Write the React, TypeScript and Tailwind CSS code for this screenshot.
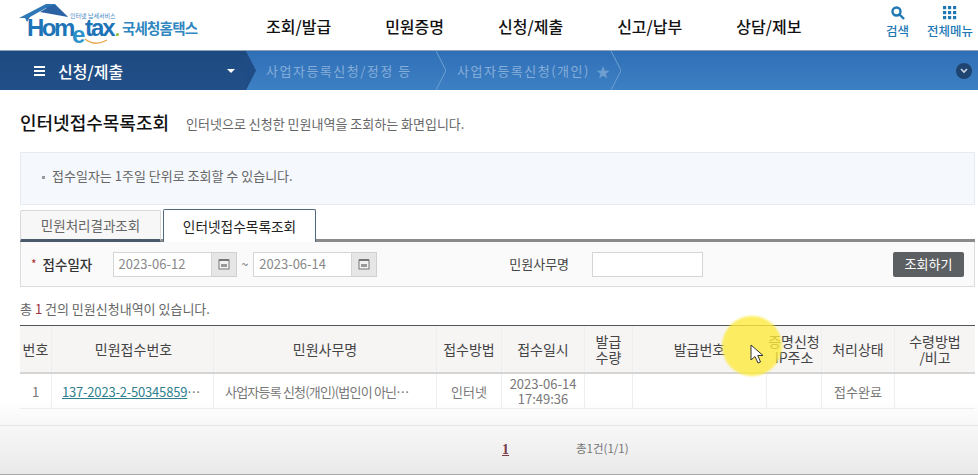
import React from 'react';

const font = "font-['Noto_Sans_CJK_KR','Noto_Sans',sans-serif]";

const topMenus = ['조회/발급', '민원증명', '신청/제출', '신고/납부', '상담/제보'];

const DateField = ({ value }: { value: string }) => (
    <div className="flex h-[25px]">
        <div className="w-[99px] border border-[#d5d5d5] bg-white pl-[5px] text-[13px] leading-[21px] text-[#888]">
            {value}
        </div>
        <div className="flex w-[25px] items-center justify-center border border-l-0 border-[#d0d0d0] bg-[#e6e6e6]">
            <svg width="12" height="12" viewBox="0 0 12 12">
                <rect x="1" y="2" width="10" height="9" fill="#f3f3f3" stroke="#777" />
                <rect x="1" y="1" width="10" height="2" fill="#777" />
                <rect x="3" y="6" width="6" height="3" fill="#999" />
            </svg>
        </div>
    </div>
);

const HeadCell = ({ className, children }: { className: string; children: React.ReactNode }) => (
    <div className={`flex items-center justify-center border-r border-[#eeeeee] text-center text-[14px] leading-[16px] text-[#444] ${className}`}>
        {children}
    </div>
);

const BodyCell = ({ className, children }: { className: string; children?: React.ReactNode }) => (
    <div className={`flex items-center justify-center border-r border-[#eeeeee] text-center text-[13px] leading-[15px] text-[#777] ${className}`}>
        {children}
    </div>
);

export default function App() {
    return (
        <div className={`relative h-[475px] w-[978px] overflow-hidden bg-white ${font}`}>
            {/* top header */}
            <header className="flex h-[51px] items-start border-b border-[#8fa3b8]">
                <div className="relative ml-[18px] h-[50px] w-[182px] shrink-0 font-['Liberation_Sans',sans-serif]">
                    <svg className="absolute left-0 top-[3px]" width="52" height="20" viewBox="0 0 52 20">
                        <path d="M1 15 L28 1 L37 1 L50 14 L28 5 L12 14 L9 19 L7 15 Z" fill="#2f78b8" />
                        <path d="M22 9 L32 3 L37 2 L50 14 Z" fill="#2a62a4" />
                    </svg>
                    <span className="absolute left-[52px] top-[12px] font-['Noto_Sans_CJK_KR',sans-serif] text-[6px] leading-[7px] text-[#3f86c4]">인터넷 납세서비스</span>
                    <span className="absolute left-[9px] top-[19px] text-[24px] font-bold leading-[17px] tracking-[-2.5px] text-[#1f74b8]">Hom</span>
                    <span className="absolute left-[54px] top-[27px] text-[24px] font-bold leading-[15px] text-[#2a93c9]">e</span>
                    <span className="absolute left-[67px] top-[19px] text-[24px] font-bold leading-[17px] tracking-[-2px] text-[#1f74b8]">tax</span>
                    <i className="absolute left-[98px] top-[33px] h-[3px] w-[3px] rounded-full bg-[#8cbb2a]" />
                    <svg className="absolute left-[66px] top-[38px]" width="24" height="8" viewBox="0 0 24 8" fill="none" stroke="#e8a94a" strokeWidth="1.3">
                        <path d="M1 1 Q11 9 23 2" />
                    </svg>
                    <span className="absolute left-[104px] top-[19px] font-['Noto_Sans_CJK_KR',sans-serif] text-[14.5px] font-bold leading-[18px] tracking-[-0.8px] text-[#2f86c0]">국세청홈택스</span>
                </div>
                <nav className="ml-[66px] flex w-[595px] gap-[54px] pt-[14px]">
                    {topMenus.map((m) => (
                        <span key={m} className="text-[16px] font-medium leading-[24px] text-[#111]">
                            {m}
                        </span>
                    ))}
                </nav>
                <div className="ml-[25px] flex flex-col items-center pt-[6px]">
                    <svg width="14" height="14" viewBox="0 0 14 14" fill="none" stroke="#1e78b4" strokeWidth="2.4">
                        <circle cx="5.5" cy="5.5" r="4" />
                        <path d="M8.5 8.5 L13 13" />
                    </svg>
                    <span className="mt-[3px] text-[12.5px] font-medium leading-[15px] text-[#1e78b4]">검색</span>
                </div>
                <div className="ml-[18px] flex flex-col items-center pt-[6px]">
                    <svg width="14" height="14" viewBox="0 0 14 14" fill="#1e78b4">
                        {[0, 5, 10].map((y) =>
                            [0, 5, 10].map((x) => <rect key={`${x}-${y}`} x={x} y={y} width="3.2" height="3.2" />),
                        )}
                    </svg>
                    <span className="mt-[3px] text-[12.5px] font-medium leading-[15px] text-[#1e78b4]">전체메뉴</span>
                </div>
            </header>

            {/* breadcrumb bar */}
            <div className="relative flex h-[39px] items-center bg-gradient-to-b from-[#2f6fb6] to-[#3e80c4]">
                <div className="flex h-full w-[246px] items-center bg-gradient-to-b from-[#1b4a80] to-[#234f88] pl-[34px]">
                    <span className="flex w-[11px] flex-col gap-[2px]">
                        <i className="h-[2px] bg-white" />
                        <i className="h-[2px] bg-white" />
                        <i className="h-[2px] bg-white" />
                    </span>
                    <span className="ml-[13px] text-[16px] font-medium leading-[22px] text-white">신청/제출</span>
                    <span className="ml-[104px] h-0 w-0 border-x-[4px] border-t-[4px] border-x-transparent border-t-white" />
                </div>
                <svg className="h-full w-[10px] shrink-0" viewBox="0 0 10 39" preserveAspectRatio="none">
                    <path d="M0 0 L10 19.5 L0 39 Z" fill="#1f4c84" />
                </svg>
                <span className="ml-[10px] w-[170px] text-[13px] leading-[20px] tracking-[1.5px] text-[#86aeda]">사업자등록신청/정정 등</span>
                <svg className="h-full w-[10px] shrink-0" viewBox="0 0 10 39" preserveAspectRatio="none" fill="none" stroke="#6ea0d3">
                    <path d="M0 0 L10 19.5 L0 39" />
                </svg>
                <span className="ml-[11px] text-[13px] leading-[20px] tracking-[1.5px] text-[#86aeda]">사업자등록신청(개인)</span>
                <span className="ml-[6px] text-[14px] leading-[20px] text-[#6f9fd0]">★</span>
                <svg className="ml-[1px] h-full w-[10px] shrink-0" viewBox="0 0 10 39" preserveAspectRatio="none" fill="none" stroke="#6ea0d3">
                    <path d="M0 0 L10 19.5 L0 39" />
                </svg>
                <span className="ml-auto mr-[6px] flex h-[16px] w-[16px] items-center justify-center rounded-full bg-[#1f4470]">
                    <svg width="8" height="6" viewBox="0 0 8 6" fill="none" stroke="#c9d6e6" strokeWidth="1.6">
                        <path d="M1 1 L4 4 L7 1" />
                    </svg>
                </span>
            </div>

            <main className="px-[20px] pr-[3px]">
                {/* title */}
                <div className="flex h-[62px] items-end pb-[18px]">
                    <h1 className="text-[18px] font-medium leading-[24px] text-[#111]">인터넷접수목록조회</h1>
                    <p className="ml-[17px] text-[13px] leading-[20px] text-[#666]">인터넷으로 신청한 민원내역을 조회하는 화면입니다.</p>
                </div>

                {/* notice */}
                <div className="flex h-[53px] items-center border border-[#e6ebf2] bg-[#f5f8fc] pb-[5px] pl-[21px] text-[13px] text-[#666]">
                    <span className="mr-[7px] mt-[3px] h-[3px] w-[3px] bg-[#999]" />
                    접수일자는 1주일 단위로 조회할 수 있습니다.
                </div>

                {/* tabs */}
                <div className="mt-[5px] flex h-[32px] items-end border-b-[3px] border-[#8a8a8a]">
                    <div className="relative -mb-[3px] flex h-[32px] w-[141px] items-center justify-center rounded-t-[2px] border border-b-[3px] border-[#d8d8d8] border-b-[#4a5a6a] bg-[#f7f7f7] text-[13.5px] text-[#666]">
                        민원처리결과조회
                    </div>
                    <div className="relative -mb-[3px] ml-[2px] flex h-[33px] w-[153px] items-center justify-center rounded-t-[2px] border border-b-0 border-[#4f6a80] bg-white text-[13.7px] text-[#222]">
                        인터넷접수목록조회
                    </div>
                </div>

                {/* search form */}
                <div className="flex h-[45px] items-center border border-t-0 border-[#dcdcdc] bg-[#fafafa] pl-[10px]">
                    <span className="text-[12px] text-[#b03030]">*</span>
                    <span className="ml-[6px] w-[70px] text-[13.5px] font-medium text-[#333]">접수일자</span>
                    <DateField value="2023-06-12" />
                    <span className="ml-[5px] mr-[5px] text-[12px] text-[#666]">~</span>
                    <DateField value="2023-06-14" />
                    <span className="ml-[132px] w-[83px] text-[13px] text-[#444]">민원사무명</span>
                    <span className="h-[25px] w-[111px] border border-[#d5d5d5] bg-white" />
                    <span className="ml-auto mr-[10px] flex h-[25px] w-[71px] items-center justify-center rounded-[2px] bg-[#5d6063] text-[13px] text-white">
                        조회하기
                    </span>
                </div>

                <p className="mt-[13px] text-[13px] leading-[18px] text-[#666]">
                    총 <span className="text-[#a0303a]">1</span> 건의 민원신청내역이 있습니다.
                </p>

                {/* table */}
                <div className="mt-[7px] border-t border-[#555]">
                    <div className="flex h-[48px] border-b-2 border-[#d5d5d5] bg-[#f6f5f4]">
                        <HeadCell className="w-[32px]">번호</HeadCell>
                        <HeadCell className="w-[162px] pl-[2px]">민원접수번호</HeadCell>
                        <HeadCell className="w-[223px]">민원사무명</HeadCell>
                        <HeadCell className="w-[65px]">접수방법</HeadCell>
                        <HeadCell className="w-[83px]">접수일시</HeadCell>
                        <HeadCell className="w-[48px]">
                            발급
                            <br />
                            수량
                        </HeadCell>
                        <HeadCell className="w-[134px]">발급번호</HeadCell>
                        <HeadCell className="w-[55px] whitespace-nowrap">
                            증명신청
                            <br />
                            IP주소
                        </HeadCell>
                        <HeadCell className="w-[73px]">처리상태</HeadCell>
                        <HeadCell className="w-[80px] border-r-0">
                            수령방법
                            <br />
                            /비고
                        </HeadCell>
                    </div>
                    <div className="flex h-[35px] border-b border-[#eeeeee]">
                        <BodyCell className="w-[32px]">1</BodyCell>
                        <BodyCell className="w-[162px] !justify-start whitespace-nowrap pl-[10px] tracking-[-0.2px]">
                            <span className="text-[#2f7f8f] underline">137-2023-2-50345859</span>…
                        </BodyCell>
                        <BodyCell className="w-[223px] !justify-start whitespace-nowrap pl-[11px] tracking-[-0.8px]">사업자등록 신청(개인)(법인이 아닌…</BodyCell>
                        <BodyCell className="w-[65px]">인터넷</BodyCell>
                        <BodyCell className="w-[83px]">
                            2023-06-14
                            <br />
                            17:49:36
                        </BodyCell>
                        <BodyCell className="w-[48px]" />
                        <BodyCell className="w-[134px]" />
                        <BodyCell className="w-[55px]" />
                        <BodyCell className="w-[73px]">접수완료</BodyCell>
                        <BodyCell className="w-[80px] border-r-0" />
                    </div>
                </div>
            </main>

            {/* bottom fade with pagination */}
            <div className="absolute inset-x-0 bottom-0 h-[75px] bg-gradient-to-b from-transparent to-[#e9e9e9]">
                <div className="mt-[25px] flex h-[49px] items-center border-t border-[#e6e6e6] pb-[2px] pl-[20px]">
                    <span className="ml-[482px] font-['Liberation_Serif',serif] text-[14px] font-bold text-[#7a3a46] underline">1</span>
                    <span className="ml-[67px] text-[11.5px] text-[#777]">총1건(1/1)</span>
                </div>
                <div className="absolute inset-x-0 bottom-0 h-px bg-[#a8a8a8]" />
            </div>

            {/* cursor highlight from the recording */}
            <div className="absolute left-[722px] top-[316px] h-[60px] w-[60px] rounded-full bg-[#fdea3c]/80 blur-[1px]" />
            <svg className="absolute left-[750px] top-[344px]" width="15" height="20" viewBox="0 0 15 20">
                <path d="M1 1 L1 16 L5 12.5 L8 19 L10.5 18 L7.8 11.5 L13 11.5 Z" fill="#fff" stroke="#333" strokeWidth="1" />
            </svg>
        </div>
    );
}
